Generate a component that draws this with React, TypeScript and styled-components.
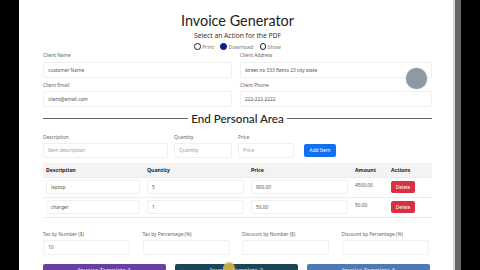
import React from 'react';
import styled, { createGlobalStyle } from 'styled-components';

const GlobalStyle = createGlobalStyle`
  html, body { margin: 0; padding: 0; background: #000; }
  body { font-family: "Noto Sans", "Open Sans", "Liberation Sans", sans-serif; color: #212529; }
  * { box-sizing: border-box; }
`;

const Screen = styled.div`
  position: relative;
  display: flex;
  width: 480px;
  height: 270px;
  overflow: hidden;
  background: #000;
`;

const SideGap = styled.div<{ $w: number }>`
  width: ${(p) => p.$w}px;
  flex-shrink: 0;
`;

const Page = styled.main`
  width: 434px;
  flex-shrink: 0;
  background: #fff;
  padding: 12px 21px 0 24px;
  overflow: hidden;
`;

const Scrollbar = styled.div`
  width: 8px;
  flex-shrink: 0;
  border-left: 2px solid #d6d6d6;
  background: #686868;
`;

const Title = styled.h1`
  margin: 0;
  font-family: "Lato", "Noto Sans", sans-serif;
  font-weight: 400;
  font-size: 14.4px;
  line-height: 18px;
  text-align: center;
  color: #222;
`;

const Subtitle = styled.div`
  margin-top: 1px;
  font-size: 6.7px;
  line-height: 9px;
  text-align: center;
  color: #333;
`;

const RadioGroup = styled.div`
  display: flex;
  justify-content: center;
  gap: 6.5px;
  margin-top: 2px;
  height: 9px;
  align-items: center;
`;

const RadioOption = styled.label`
  display: flex;
  align-items: center;
  gap: 1.5px;
  font-size: 5.2px;
  color: #777;
`;

const RadioDot = styled.span<{ $checked?: boolean }>`
  width: 6.5px;
  height: 6.5px;
  border-radius: 50%;
  border: 1px solid ${(p) => (p.$checked ? '#0b1f8c' : '#222')};
  background: ${(p) => (p.$checked ? '#0b1f8c' : '#fff')};
`;

const Grid = styled.div<{ $cols: string; $gap?: number; $mt?: number }>`
  display: grid;
  grid-template-columns: ${(p) => p.$cols};
  column-gap: ${(p) => p.$gap ?? 8}px;
  margin-top: ${(p) => p.$mt ?? 0}px;
  align-items: end;
`;

const Field = styled.div<{ $mt?: number }>`
  display: flex;
  flex-direction: column;
  margin-top: ${(p) => p.$mt ?? 0}px;
`;

const Label = styled.div`
  font-size: 4.8px;
  line-height: 8px;
  color: #666;
  white-space: nowrap;
`;

const Input = styled.div<{ $h?: number; $mt?: number; $placeholder?: boolean }>`
  height: ${(p) => p.$h ?? 16}px;
  margin-top: ${(p) => p.$mt ?? 3}px;
  border: 1px solid #f0f0f0;
  border-radius: 2px;
  padding: 0 4px;
  display: flex;
  align-items: center;
  font-size: 4.8px;
  color: ${(p) => (p.$placeholder ? '#a0a0a0' : '#555')};
  white-space: nowrap;
  overflow: hidden;
`;

const Divider = styled.div`
  display: flex;
  align-items: center;
  gap: 3px;
  margin-top: 6px;
  height: 12px;
`;

const Rule = styled.div`
  flex: 1;
  height: 1px;
  background: #666;
`;

const DividerText = styled.h2`
  margin: 0;
  font-family: "Lato", "Noto Sans", sans-serif;
  font-weight: 500;
  font-size: 11.6px;
  line-height: 12px;
  color: #222;
  white-space: nowrap;
`;

const Button = styled.button<{ $bg: string; $w?: number; $h?: number }>`
  width: ${(p) => (p.$w ? `${p.$w}px` : 'auto')};
  height: ${(p) => p.$h ?? 13}px;
  border: none;
  border-radius: 2px;
  background: ${(p) => p.$bg};
  color: #fff;
  font-family: inherit;
  font-size: 4.8px;
  padding: 0;
  display: flex;
  align-items: center;
  justify-content: center;
`;

const Table = styled.div`
  margin-top: 5px;
  width: 389px;
`;

const TableRow = styled.div<{ $head?: boolean }>`
  display: grid;
  grid-template-columns: 101px 104px 104px 36px 44px;
  height: ${(p) => (p.$head ? 15 : 20)}px;
  background: ${(p) => (p.$head ? '#f3f3f3' : '#fff')};
  border-bottom: 1px solid #ececec;
`;

const HeadCell = styled.div`
  display: flex;
  align-items: center;
  padding-left: 3px;
  font-size: 5.2px;
  font-weight: 700;
  color: #1b1b1b;
`;

const Cell = styled.div<{ $top?: boolean }>`
  display: flex;
  align-items: ${(p) => (p.$top ? 'flex-start' : 'center')};
  padding: ${(p) => (p.$top ? '4px 0 0 3px' : '0 4px 0 3px')};
  font-size: 4.8px;
  color: #555;
`;

const CellInput = styled(Input)`
  flex: 1;
  margin-top: 0;
`;

const ActionBar = styled.div`
  display: grid;
  grid-template-columns: repeat(3, 123px);
  column-gap: 9px;
  margin-top: 9px;
`;

const BigButton = styled(Button)`
  height: 22px;
  align-items: flex-start;
  padding-top: 2.5px;
  font-size: 6px;
  color: #e8e8f0;
`;

const Cursor = styled.div`
  position: absolute;
  left: 405.5px;
  top: 67.5px;
  width: 21px;
  height: 21px;
  border-radius: 50%;
  background: #8f99a4;
  box-shadow: 0 0 1.5px #aab2ba;
`;

const ClickMark = styled.div`
  position: absolute;
  left: 223px;
  top: 262px;
  width: 12px;
  height: 12px;
  border-radius: 50%;
  background: #d4b54e;
  opacity: 0.9;
`;

const items = [
  { desc: 'laptop', qty: '5', price: '900.00', amount: '4500.00' },
  { desc: 'charger', qty: '1', price: '50.00', amount: '50.00' },
];

const App = () => {
  return (
    <>
      <GlobalStyle />
      <Screen>
        <SideGap $w={19} />
        <Page>
          <Title>Invoice Generator</Title>
          <Subtitle>Select an Action for the PDF</Subtitle>
          <RadioGroup>
            <RadioOption><RadioDot />Print</RadioOption>
            <RadioOption><RadioDot $checked />Download</RadioOption>
            <RadioOption><RadioDot />Show</RadioOption>
          </RadioGroup>

          <Grid $cols="189px 192px" $mt={-0.5}>
            <Field>
              <Label>Client Name</Label>
              <Input>customer Name</Input>
            </Field>
            <Field>
              <Label>Client Address</Label>
              <Input>street no 333 flatno 23 city state</Input>
            </Field>
            <Field $mt={3}>
              <Label>Client Email</Label>
              <Input $mt={2}>client@email.com</Input>
            </Field>
            <Field $mt={3}>
              <Label>Client Phone</Label>
              <Input $mt={2}>222-222-2222</Input>
            </Field>
          </Grid>

          <Divider>
            <Rule />
            <DividerText>End Personal Area</DividerText>
            <Rule />
          </Divider>

          <Grid $cols="125px 58px 56px auto" $gap={6} $mt={8}>
            <Field>
              <Label>Description</Label>
              <Input $h={15} $mt={2} $placeholder>Item description</Input>
            </Field>
            <Field>
              <Label>Quantity</Label>
              <Input $h={15} $mt={2} $placeholder>Quantity</Input>
            </Field>
            <Field>
              <Label>Price</Label>
              <Input $h={15} $mt={2} $placeholder>Price</Input>
            </Field>
            <Field style={{ paddingLeft: 4, paddingBottom: 1 }}>
              <Button $bg="#1170f0" $w={32}>Add Item</Button>
            </Field>
          </Grid>

          <Table>
            <TableRow $head>
              <HeadCell>Description</HeadCell>
              <HeadCell>Quantity</HeadCell>
              <HeadCell>Price</HeadCell>
              <HeadCell>Amount</HeadCell>
              <HeadCell>Actions</HeadCell>
            </TableRow>
            {items.map((it) => (
              <TableRow key={it.desc}>
                <Cell><CellInput $h={14}>{it.desc}</CellInput></Cell>
                <Cell><CellInput $h={14}>{it.qty}</CellInput></Cell>
                <Cell><CellInput $h={14}>{it.price}</CellInput></Cell>
                <Cell $top>{it.amount}</Cell>
                <Cell>
                  <Button $bg="#d9303f" $w={24} $h={12}>Delete</Button>
                </Cell>
              </TableRow>
            ))}
          </Table>

          <Grid $cols="repeat(4, 87px)" $gap={12.5} $mt={12}>
            <Field>
              <Label>Tax by Number ($)</Label>
              <Input $h={15} $mt={2}>10</Input>
            </Field>
            <Field>
              <Label>Tax by Percentage (%)</Label>
              <Input $h={15} $mt={2} />
            </Field>
            <Field>
              <Label>Discount by Number ($)</Label>
              <Input $h={15} $mt={2} />
            </Field>
            <Field>
              <Label>Discount by Percentage (%)</Label>
              <Input $h={15} $mt={2} />
            </Field>
          </Grid>

          <ActionBar>
            <BigButton $bg="#6a3fa3">Invoice Template 1</BigButton>
            <BigButton $bg="#1b4657">Invoice Template 2</BigButton>
            <BigButton $bg="#4f79b4">Invoice Template 3</BigButton>
          </ActionBar>
        </Page>
        <Scrollbar />
        <SideGap $w={19} />
        <Cursor />
        <ClickMark />
      </Screen>
    </>
  );
};

export default App;
